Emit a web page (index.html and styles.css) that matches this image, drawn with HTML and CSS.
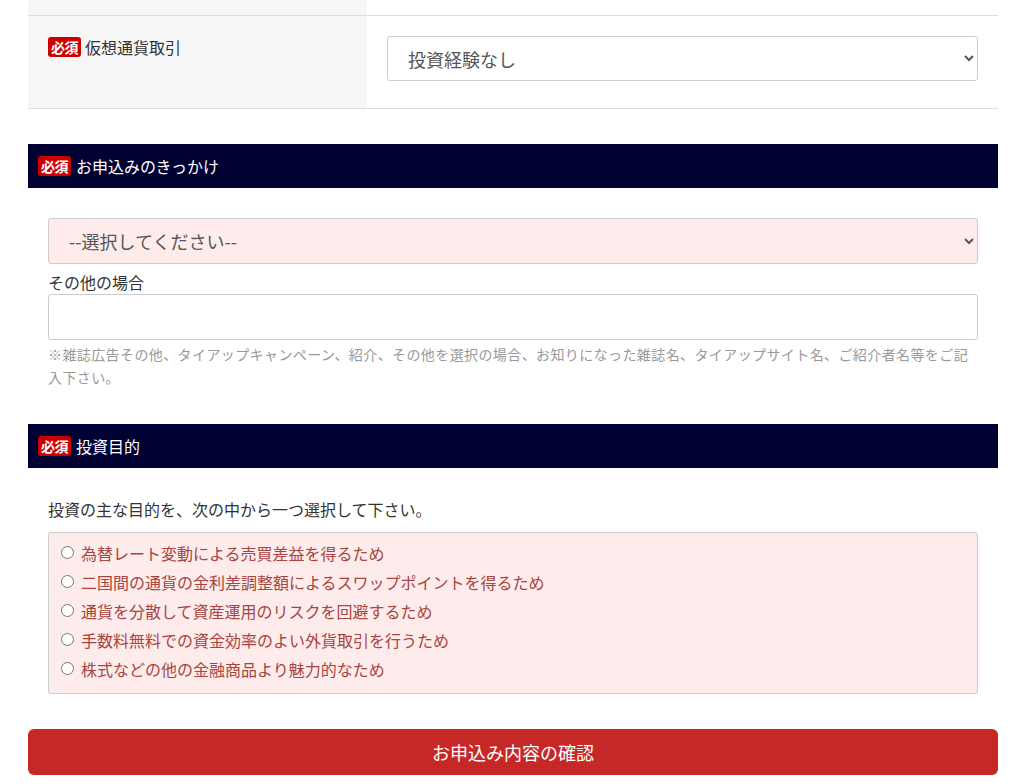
FILE: index.html
```html
<!DOCTYPE html>
<html lang="ja">
<head>
<meta charset="utf-8">
<link rel="stylesheet" href="styles.css">
</head>
<body>
<div class="wrap">
  <div class="row row-top">
    <div class="cell-label"></div>
    <div class="cell-input"></div>
  </div>
  <div class="row row-main">
    <div class="cell-label"><span class="badge">必須</span><span class="label-text">仮想通貨取引</span></div>
    <div class="cell-input">
      <select class="sel sel-white"><option>投資経験なし</option></select>
    </div>
  </div>

  <div class="sec-head"><span class="badge">必須</span><span class="head-text">お申込みのきっかけ</span></div>
  <div class="sec-body sec-body-1">
    <select class="sel sel-pink"><option>--選択してください--</option></select>
    <div class="sub-label">その他の場合</div>
    <input class="txt" type="text">
    <p class="note">※雑誌広告その他、タイアップキャンペーン、紹介、その他を選択の場合、お知りになった雑誌名、タイアップサイト名、ご紹介者名等をご記入下さい。</p>
  </div>

  <div class="sec-head"><span class="badge">必須</span><span class="head-text">投資目的</span></div>
  <div class="sec-body sec-body-2">
    <p class="lead">投資の主な目的を、次の中から一つ選択して下さい。</p>
    <div class="radio-box">
      <label class="radio-item"><input type="radio" name="p"><span>為替レート変動による売買差益を得るため</span></label>
      <label class="radio-item"><input type="radio" name="p"><span>二国間の通貨の金利差調整額によるスワップポイントを得るため</span></label>
      <label class="radio-item"><input type="radio" name="p"><span>通貨を分散して資産運用のリスクを回避するため</span></label>
      <label class="radio-item"><input type="radio" name="p"><span>手数料無料での資金効率のよい外貨取引を行うため</span></label>
      <label class="radio-item"><input type="radio" name="p"><span>株式などの他の金融商品より魅力的なため</span></label>
    </div>
  </div>

  <button class="submit" type="button">お申込み内容の確認</button>
</div>
</body>
</html>
```

FILE: styles.css
```css
html, body {
  margin: 0;
  padding: 0;
  background: #fff;
}
body {
  font-family: "Noto Sans CJK JP", "Noto Sans", sans-serif;
  color: #333;
}
.wrap {
  width: 970px;
  margin-left: 28px;
  padding-bottom: 20px;
}
.row {
  display: flex;
  border-bottom: 1px solid #dddddd;
}
.cell-label {
  width: 339px;
  flex: none;
  background: #f6f6f6;
}
.cell-input {
  flex: 1;
}
.row-top {
  height: 15px;
}
.row-main {
  height: 92px;
}
.row-main .cell-label {
  padding: 21px 0 0 20px;
  box-sizing: border-box;
  display: flex;
  align-items: flex-start;
  gap: 4px;
}
.row-main .cell-input {
  padding: 20px 20px 0 20px;
}
.badge {
  display: inline-block;
  background: #cc0000;
  color: #fff;
  font-size: 14px;
  line-height: 20px;
  height: 20px;
  padding: 0 3px;
  border-radius: 3px;
  font-weight: bold;
  letter-spacing: -0.5px;
}
.label-text {
  font-size: 16px;
  line-height: 20px;
  color: #333;
}
.sel {
  display: block;
  width: 100%;
  height: 45px;
  box-sizing: border-box;
  border: 1px solid #cccccc;
  border-radius: 3px;
  font-family: "Noto Sans CJK JP", sans-serif;
  font-size: 18px;
  color: #555;
  padding: 0 0 0 16px;
}
.sel-white {
  background-color: #fff;
}
.sel-pink {
  background-color: #fdeceb;
  height: 46px;
}
.sec-head {
  margin-top: 35px;
  height: 44px;
  background: #000033;
  display: flex;
  align-items: center;
  padding-left: 10px;
  gap: 5px;
}
.head-text {
  color: #fff;
  font-size: 16px;
  line-height: 20px;
}
.sec-body {
  padding: 0 20px;
}
.sec-body-1 {
  padding-top: 30px;
}
.sub-label {
  font-size: 16px;
  line-height: 24px;
  margin-top: 6px;
  color: #333;
}
.txt {
  display: block;
  width: 100%;
  height: 46px;
  box-sizing: border-box;
  border: 1px solid #cccccc;
  border-radius: 3px;
  margin-top: 0;
  background: #fff;
}
.note {
  margin: 3px 0 0 0;
  font-size: 14px;
  line-height: 23px;
  color: #999;
  letter-spacing: 0.4px;
}
.sec-body-2 {
  padding-top: 30px;
}
.lead {
  margin: 0;
  font-size: 16px;
  line-height: 22px;
  color: #333;
}
.radio-box {
  margin-top: 12px;
  background: #fdeceb;
  border: 1px solid #cccccc;
  border-radius: 3px;
  padding: 5px 12px 10px 12px;
  display: flex;
  flex-direction: column;
}
.radio-item {
  display: flex;
  align-items: center;
  height: 29px;
  font-size: 16px;
  color: #a9443f;
}
.radio-item input {
  width: 13px;
  height: 13px;
  margin: 0 7px 0 0;
}
.submit {
  display: block;
  width: 100%;
  height: 46px;
  margin-top: 35px;
  background: #c62828;
  color: #fff;
  border: none;
  border-radius: 6px;
  font-family: "Noto Sans CJK JP", sans-serif;
  font-size: 18px;
}
```
